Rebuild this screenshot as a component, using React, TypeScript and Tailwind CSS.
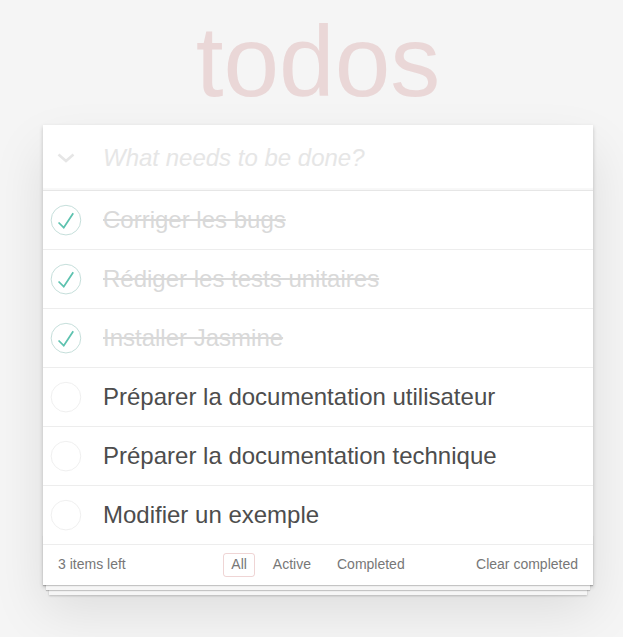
import { useState } from 'react';

type Todo = { id: number; title: string; completed: boolean };

const initialTodos: Todo[] = [
  { id: 1, title: 'Corriger les bugs', completed: true },
  { id: 2, title: 'Rédiger les tests unitaires', completed: true },
  { id: 3, title: 'Installer Jasmine', completed: true },
  { id: 4, title: 'Préparer la documentation utilisateur', completed: false },
  { id: 5, title: 'Préparer la documentation technique', completed: false },
  { id: 6, title: 'Modifier un exemple', completed: false },
];

// Cercle de la case à cocher, comme l'image de fond de TodoMVC
function Check({ done }: { done: boolean }) {
  return (
    <svg width="40" height="40" viewBox="-10 -18 100 135" className="shrink-0">
      <circle cx="50" cy="50" r="50" fill="none" stroke={done ? '#bddad5' : '#ededed'} strokeWidth="3" />
      {done && <path fill="#5dc2af" d="M72 25L42 71 27 56l-4 4 20 20 34-52z" />}
    </svg>
  );
}

export default function App() {
  const [todos, setTodos] = useState<Todo[]>(initialTodos);
  const [filter, setFilter] = useState('All');
  const left = todos.filter(t => !t.completed).length;

  const toggle = (id: number) =>
    setTodos(prev => prev.map(t => (t.id === id ? { ...t, completed: !t.completed } : t)));

  return (
    <div className="min-h-screen bg-[#f5f5f5] text-[#4d4d4d] font-['Liberation_Sans',Arial,sans-serif] text-[14px] leading-[1.4em] pt-[125px] pb-10">
      <div className="relative ml-[43px] w-[550px] bg-white shadow-[0_2px_4px_rgba(0,0,0,0.2),0_25px_50px_rgba(0,0,0,0.1)]">
        <h1 className="absolute -top-[134px] w-full text-center text-[100px] leading-[1.4] font-thin text-[rgba(175,47,47,0.15)]">
          todos
        </h1>

        {/* Saisie d'une nouvelle tâche */}
        <div className="relative flex items-center shadow-[inset_0_-2px_1px_rgba(0,0,0,0.03)]">
          <svg width="18" height="10" viewBox="0 0 18 10" className="absolute left-[14px] top-[28px]">
            <polyline points="1.5,1.5 9,8 16.5,1.5" fill="none" stroke="#e6e6e6" strokeWidth="2.6" />
          </svg>
          <input
            placeholder="What needs to be done?"
            className="w-full pl-[60px] pr-4 py-4 text-[24px] leading-[33px] bg-transparent outline-none placeholder:italic placeholder:font-light placeholder:text-[#e6e6e6]"
          />
        </div>

        <ul className="border-t border-[#e6e6e6]">
          {todos.map(t => (
            <li key={t.id} className="flex items-center border-b border-[#ededed] text-[24px]" onClick={() => toggle(t.id)}>
              <Check done={t.completed} />
              <span
                className={`ml-5 py-[15px] pr-[15px] leading-[28px] ${
                  t.completed ? 'text-[#d9d9d9] line-through' : 'text-[#4d4d4d]'
                }`}
              >
                {t.title}
              </span>
            </li>
          ))}
        </ul>

        {/* Pied de liste */}
        <footer className="relative h-10 px-[15px] flex items-center text-[#777] text-[14px]">
          <div className="absolute inset-x-0 bottom-0 h-[50px] pointer-events-none shadow-[0_1px_1px_rgba(0,0,0,0.2),0_8px_0_-3px_#f6f6f6,0_9px_1px_-3px_rgba(0,0,0,0.2),0_16px_0_-6px_#f6f6f6,0_17px_2px_-6px_rgba(0,0,0,0.2)]" />
          <span className="relative w-[160px]">{left} items left</span>
          <ul className="relative flex-1 flex justify-center gap-[10px]">
            {['All', 'Active', 'Completed'].map(f => (
              <li key={f}>
                <button
                  onClick={() => setFilter(f)}
                  className={`px-[7px] py-[1px] rounded-[3px] border leading-[1.4em] ${
                    filter === f ? 'border-[rgba(175,47,47,0.2)]' : 'border-transparent'
                  }`}
                >
                  {f}
                </button>
              </li>
            ))}
          </ul>
          <button className="relative w-[160px] text-right">Clear completed</button>
        </footer>
      </div>
    </div>
  );
}
